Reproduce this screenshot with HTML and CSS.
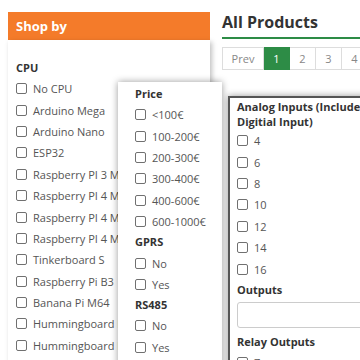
FILE: index.html
```html
<!DOCTYPE html>
<html lang="en">
<head>
    <meta charset="UTF-8">
    <meta name="viewport" content="width=device-width, initial-scale=1.0">
    <title>All Products</title>
    <link rel="stylesheet" href="styles.css">
</head>
<body>
    <div class="page">
        <aside class="sidebar">
            <div class="shop-head">Shop by</div>
            <div class="filter-box">
                <h4>CPU</h4>
                <label><input type="checkbox"> No CPU</label>
                <label><input type="checkbox"> Arduino Mega</label>
                <label><input type="checkbox"> Arduino Nano</label>
                <label><input type="checkbox"> ESP32</label>
                <label><input type="checkbox"> Raspberry PI 3 Model B</label>
                <label><input type="checkbox"> Raspberry PI 4 Model B</label>
                <label><input type="checkbox"> Raspberry PI 4 Model B</label>
                <label><input type="checkbox"> Raspberry PI 4 Model B</label>
                <label><input type="checkbox"> Tinkerboard S</label>
                <label><input type="checkbox"> Raspberry Pi B3</label>
                <label><input type="checkbox"> Banana Pi M64</label>
                <label><input type="checkbox"> Hummingboard Base</label>
                <label><input type="checkbox"> Hummingboard Pro</label>
            </div>
        </aside>

        <main class="content">
            <h2>All Products</h2>
            <nav class="pager">
                <a class="prev">Prev</a>
                <a class="active">1</a>
                <a>2</a>
                <a>3</a>
                <a>4</a>
            </nav>
        </main>

        <div class="popup popup-price">
            <h4>Price</h4>
            <label><input type="checkbox"> &lt;100€</label>
            <label><input type="checkbox"> 100-200€</label>
            <label><input type="checkbox"> 200-300€</label>
            <label><input type="checkbox"> 300-400€</label>
            <label><input type="checkbox"> 400-600€</label>
            <label><input type="checkbox"> 600-1000€</label>
            <h4>GPRS</h4>
            <label><input type="checkbox"> No</label>
            <label><input type="checkbox"> Yes</label>
            <h4>RS485</h4>
            <label><input type="checkbox"> No</label>
            <label><input type="checkbox"> Yes</label>
        </div>

        <div class="popup popup-analog">
            <h4 class="wrap-title">Analog Inputs (Included Digitial Input)</h4>
            <label><input type="checkbox"> 4</label>
            <label><input type="checkbox"> 6</label>
            <label><input type="checkbox"> 8</label>
            <label><input type="checkbox"> 10</label>
            <label><input type="checkbox"> 12</label>
            <label><input type="checkbox"> 14</label>
            <label><input type="checkbox"> 16</label>
            <h4>Outputs</h4>
            <input type="text" class="text-field">
            <h4>Relay Outputs</h4>
            <label><input type="checkbox"> 7</label>
        </div>
    </div>
</body>
</html>
```

FILE: styles.css
```css
body {
    margin: 0;
    font-family: "Open Sans", "Liberation Sans", sans-serif;
    color: #555;
    background: #fff;
    overflow: hidden;
}
.page {
    position: relative;
    display: flex;
    padding: 12px 0 0 8px;
    height: 348px;
    overflow: hidden;
}
.sidebar {
    width: 202px;
    flex-shrink: 0;
}
.shop-head {
    background-color: #f47b2a;
    color: #fff;
    font-size: 13px;
    font-weight: bold;
    height: 28px;
    line-height: 28px;
    padding-left: 8px;
}
.filter-box {
    padding: 18px 0 0 8px;
    box-shadow: 2px 2px 5px rgba(0, 0, 0, 0.25);
    height: 400px;
    overflow: hidden;
    white-space: nowrap;
}
h4 {
    margin: 0;
    font-size: 11px;
    font-weight: bold;
    color: #333;
    height: 20px;
    line-height: 20px;
}
label {
    display: flex;
    align-items: center;
    height: 21.4px;
    font-size: 11px;
    white-space: nowrap;
}
input[type="checkbox"] {
    appearance: none;
    -webkit-appearance: none;
    width: 11px;
    height: 11px;
    margin: 0 6px 0 0;
    border: 1px solid #707070;
    border-radius: 2px;
    background: #fff;
    flex-shrink: 0;
}
.content {
    margin-left: 12px;
    flex: 1;
}
.content h2 {
    margin: 0;
    font-size: 16px;
    font-weight: bold;
    color: #333;
    height: 25px;
    line-height: 20px;
    border-bottom: 2px solid #2d8c46;
    white-space: nowrap;
}
.pager {
    display: flex;
    margin-top: 8px;
}
.pager a {
    width: 25px;
    height: 21px;
    line-height: 21px;
    text-align: center;
    font-size: 11px;
    color: #888;
    border: 1px solid #ddd;
    border-left: none;
}
.pager .prev {
    width: 40px;
    border-left: 1px solid #ddd;
}
.pager .active {
    background-color: #2d8c46;
    border-color: #2d8c46;
    color: #fff;
}
.popup {
    position: absolute;
    background: #fff;
    box-shadow: 0 0 7px rgba(0, 0, 0, 0.4);
    overflow: hidden;
}
.popup-price {
    left: 118px;
    top: 82px;
    width: 87px;
    height: 300px;
    padding: 2px 0 0 17px;
}
.popup-analog {
    left: 228px;
    top: 96px;
    width: 200px;
    height: 300px;
    padding: 1px 0 0 7px;
    border-top: 2px solid #555;
    border-left: 2px solid #555;
}
.popup-analog .wrap-title {
    width: 150px;
    height: auto;
    line-height: 15px;
    white-space: normal;
    margin-bottom: 1px;
}
.text-field {
    display: block;
    width: 140px;
    height: 22px;
    margin: 2px 0 4px;
    border: 1px solid #ccc;
    border-radius: 3px;
}
```
